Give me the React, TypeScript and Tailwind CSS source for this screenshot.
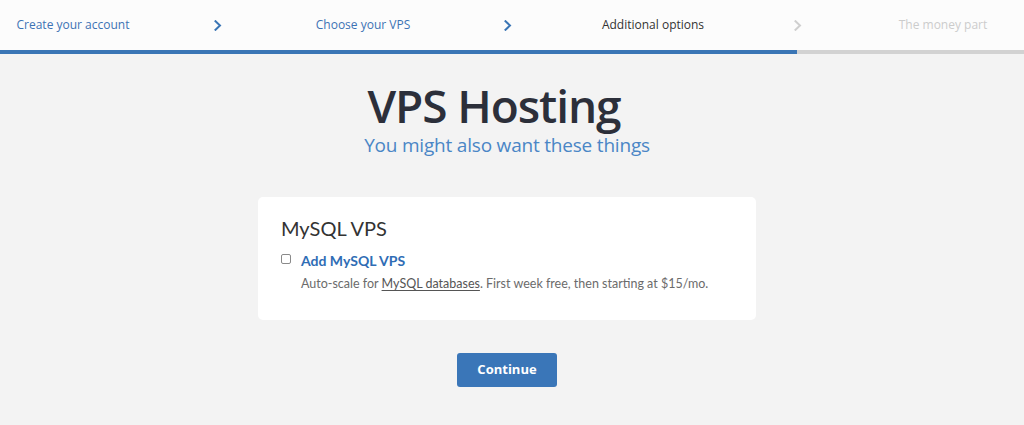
import React from 'react';

const steps = [
  { label: 'Create your account', state: 'done' },
  { label: 'Choose your VPS', state: 'done' },
  { label: 'Additional options', state: 'current' },
  { label: 'The money part', state: 'todo' },
];

const Chevron = ({ active }: { active: boolean }) => (
  <svg width="8" height="11" viewBox="0 0 8 11" fill="none" className="shrink-0">
    <path
      d="M1.5 1.2 L6 5.5 L1.5 9.8"
      stroke={active ? '#3a75b5' : '#cfcfcf'}
      strokeWidth="2"
      strokeLinecap="square"
    />
  </svg>
);

export default function App() {
  return (
    <div className="min-h-[425px] w-full overflow-hidden bg-[#f3f3f3] font-['Open_Sans',sans-serif]">
      <div className="overflow-hidden bg-[#fcfcfc]">
        <div className="-ml-[68px] flex h-[50px] items-center">
          {steps.map((s, i) => (
            <React.Fragment key={s.label}>
              <div
                className={`flex w-[282px] shrink-0 justify-center text-[12px] ${
                  s.state === 'done'
                    ? 'text-[#3c73b4]'
                    : s.state === 'current'
                    ? 'text-[#333333]'
                    : 'text-[#cccccc]'
                }`}
              >
                {s.label}
              </div>
              {i < steps.length - 1 && <Chevron active={i < 2} />}
            </React.Fragment>
          ))}
        </div>
        <div className="flex h-[4px]">
          <div className="w-[797px] bg-[#3a75b5]" />
          <div className="flex-1 bg-[#d2d2d2]" />
        </div>
      </div>

      <div className="flex flex-col items-center pr-[10px]">
        <h1 className="mr-[26px] mt-[27px] text-[46px] font-semibold leading-[48px] tracking-[-1.1px] text-[#2c2f3a]">
          VPS Hosting
        </h1>
        <p className="mt-[4px] text-[19px] leading-[24px] tracking-[-0.2px] text-[#4a86c6]">
          You might also want these things
        </p>

        <div className="mt-[40px] w-[498px] rounded-[5px] bg-white px-[23px] pb-[27px] pt-[17px] font-['Lato',sans-serif]">
          <h2 className="text-[20px] leading-[28px] text-[#333333]">MySQL VPS</h2>
          <div className="mt-[9px] flex items-start gap-[10px]">
            <input
              type="checkbox"
              className="mt-[3px] h-[10px] w-[10px] appearance-none rounded-[2px] border border-[#8a8a8a] bg-white"
            />
            <div>
              <div className="text-[14px] font-bold leading-[20px] text-[#2f6db5]">Add MySQL VPS</div>
              <p className="mt-[4px] text-[12.5px] leading-[18px] text-[#6b6b6b]">
                Auto-scale for{' '}
                <span className="text-[#555555] underline underline-offset-2">MySQL databases</span>. First week
                free, then starting at $15/mo.
              </p>
            </div>
          </div>
        </div>

        <button className="mt-[33px] h-[34px] w-[100px] rounded-[3px] bg-[#3a76b8] text-[13px] font-bold text-white">
          Continue
        </button>
      </div>
    </div>
  );
}
